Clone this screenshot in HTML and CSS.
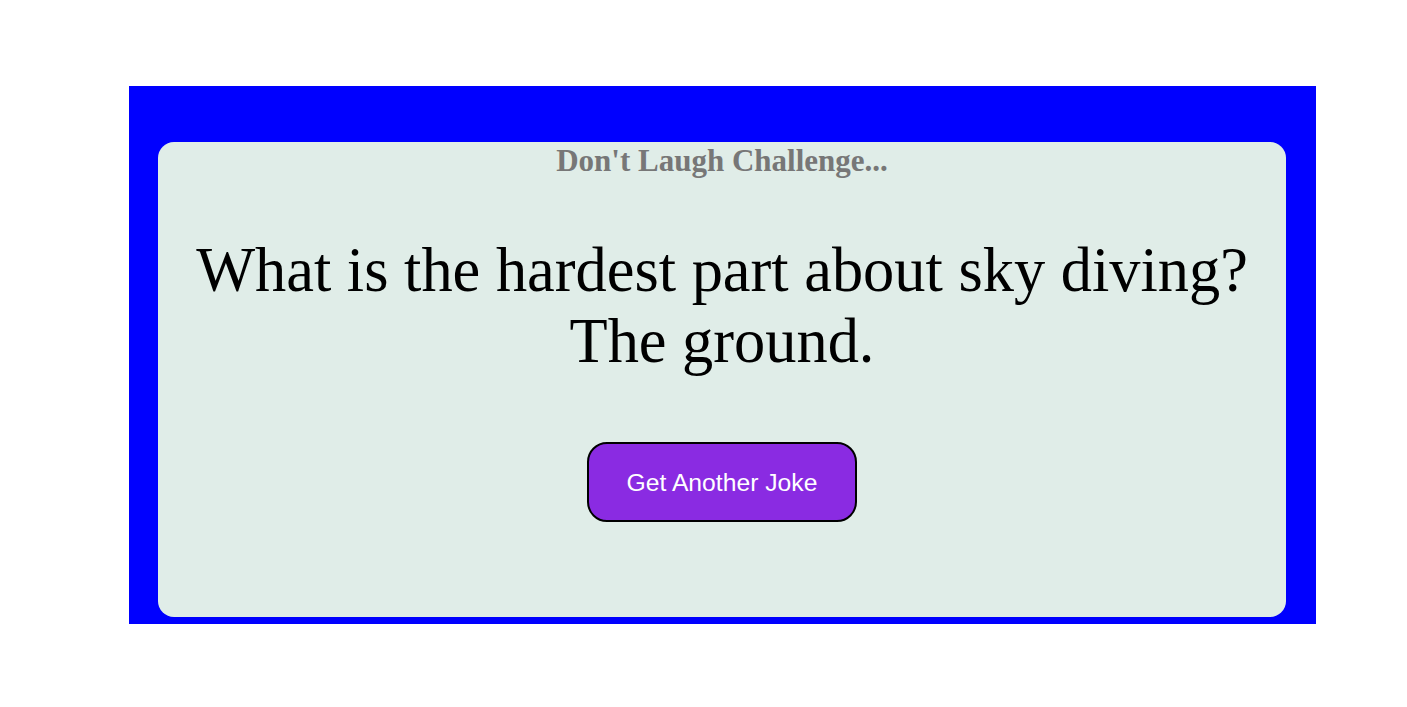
FILE: index.html
```html
<!DOCTYPE html>
<html>
<head>
<meta charset="utf-8">
<link rel="stylesheet" href="styles.css">
</head>
<body>
<div class="frame">
  <div class="card">
    <h3 class="title">Don't Laugh Challenge...</h3>
    <p class="joke">What is the hardest part about sky diving? The ground.</p>
    <button class="btn">Get Another Joke</button>
  </div>
</div>
</body>
</html>
```
FILE: styles.css
```css
html, body {
  margin: 0;
  padding: 0;
  background: #ffffff;
}
body {
  padding-top: 86px;
  font-family: "Liberation Serif", "Times New Roman", serif;
}
.frame {
  margin-left: 129px;
  width: 1187px;
  height: 538px;
  box-sizing: border-box;
  padding: 56px 30px 0 29px;
  background: #0000ff;
}
.card {
  height: 475px;
  background: #e0ede8;
  border-radius: 16px;
  display: flex;
  flex-direction: column;
  align-items: center;
  text-align: center;
}
.title {
  margin: 2px 0 0;
  font-size: 31px;
  font-weight: bold;
  color: #777777;
  line-height: 34px;
}
.joke {
  margin: 56px 20px 0;
  font-size: 62.4px;
  line-height: 71px;
  color: #000;
}
.btn {
  margin-top: 66px;
  width: 270px;
  height: 80px;
  padding: 2px 0 0;
  background: #8a2be2;
  color: #fff;
  border: 2px solid #000;
  border-radius: 20px;
  font-family: "Liberation Sans", Arial, sans-serif;
  font-size: 24.7px;
}
```
